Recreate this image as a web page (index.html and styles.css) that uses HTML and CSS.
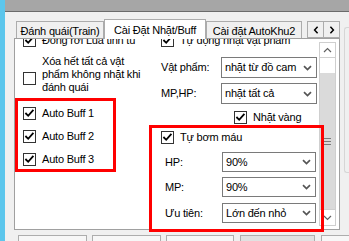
FILE: index.html
```html
<!DOCTYPE html>
<html lang="vi">
<head>
    <meta charset="UTF-8">
    <meta name="viewport" content="width=device-width, initial-scale=1.0">
    <title>Cài Đặt Nhặt/Buff</title>
    <link rel="stylesheet" href="styles.css">
</head>
<body>
    <div class="accent"></div>

    <div class="window">
        <div class="titlebar"></div>

        <div class="client">
            <div class="top-row">
                <div class="tab-control">
                    <div class="tab-strip">
                        <div class="tab tab-train">Đánh quái(Train)</div>
                        <div class="tab tab-loot active">Cài Đặt Nhặt/Buff</div>
                        <div class="tab tab-khu">Cài đặt AutoKhu2</div>
                        <div class="tab-scroll">
                            <span class="tab-arrow">
                                <svg width="6" height="8" viewBox="0 0 6 8"><path d="M4.6 0.8 L1.6 4 L4.6 7.2" fill="none" stroke="#000" stroke-width="1.5"/></svg>
                            </span>
                            <span class="tab-arrow">
                                <svg width="6" height="8" viewBox="0 0 6 8"><path d="M1.4 0.8 L4.4 4 L1.4 7.2" fill="none" stroke="#000" stroke-width="1.5"/></svg>
                            </span>
                        </div>
                    </div>

                    <div class="tab-panel">
                        <div class="scroll-view">
                            <div class="content">
                                <div class="col col-left">
                                    <label class="check">
                                        <span class="box"><svg width="11" height="11" viewBox="0 0 11 11"><path d="M1.4 5 L4.2 7.8 L9.4 1.8" fill="none" stroke="#000" stroke-width="1.8"/></svg></span>
                                        Đồng rời Lúa tinh tú
                                    </label>
                                    <label class="check multi">
                                        <span class="box"></span>
                                        <span>Xóa hết tất cả vật<br>phẩm không nhặt khi<br>đánh quái</span>
                                    </label>
                                    <label class="check buff first-buff">
                                        <span class="box"><svg width="11" height="11" viewBox="0 0 11 11"><path d="M1.4 5 L4.2 7.8 L9.4 1.8" fill="none" stroke="#000" stroke-width="1.8"/></svg></span>
                                        Auto Buff 1
                                    </label>
                                    <label class="check buff">
                                        <span class="box"><svg width="11" height="11" viewBox="0 0 11 11"><path d="M1.4 5 L4.2 7.8 L9.4 1.8" fill="none" stroke="#000" stroke-width="1.8"/></svg></span>
                                        Auto Buff 2
                                    </label>
                                    <label class="check buff">
                                        <span class="box"><svg width="11" height="11" viewBox="0 0 11 11"><path d="M1.4 5 L4.2 7.8 L9.4 1.8" fill="none" stroke="#000" stroke-width="1.8"/></svg></span>
                                        Auto Buff 3
                                    </label>
                                </div>

                                <div class="col col-right">
                                    <label class="check">
                                        <span class="box"><svg width="11" height="11" viewBox="0 0 11 11"><path d="M1.4 5 L4.2 7.8 L9.4 1.8" fill="none" stroke="#000" stroke-width="1.8"/></svg></span>
                                        Tự động nhặt vật phẩm
                                    </label>
                                    <div class="field loot-type">
                                        <span class="field-label">Vật phẩm:</span>
                                        <div class="combo">
                                            <span>nhặt từ đồ cam</span>
                                            <svg width="9" height="6" viewBox="0 0 9 6"><path d="M1 1.2 L4.5 4.6 L8 1.2" fill="none" stroke="#555" stroke-width="1.7"/></svg>
                                        </div>
                                    </div>
                                    <div class="field loot-target">
                                        <span class="field-label">MP,HP:</span>
                                        <div class="combo">
                                            <span>nhặt tất cả</span>
                                            <svg width="9" height="6" viewBox="0 0 9 6"><path d="M1 1.2 L4.5 4.6 L8 1.2" fill="none" stroke="#555" stroke-width="1.7"/></svg>
                                        </div>
                                    </div>
                                    <label class="check gold">
                                        <span class="box"><svg width="11" height="11" viewBox="0 0 11 11"><path d="M1.4 5 L4.2 7.8 L9.4 1.8" fill="none" stroke="#000" stroke-width="1.8"/></svg></span>
                                        Nhặt vàng
                                    </label>
                                    <label class="check potion-toggle">
                                        <span class="box"><svg width="11" height="11" viewBox="0 0 11 11"><path d="M1.4 5 L4.2 7.8 L9.4 1.8" fill="none" stroke="#000" stroke-width="1.8"/></svg></span>
                                        Tự bơm máu
                                    </label>
                                    <div class="field potion potion-hp">
                                        <span class="field-label">HP:</span>
                                        <div class="combo">
                                            <span>90%</span>
                                            <svg width="9" height="6" viewBox="0 0 9 6"><path d="M1 1.2 L4.5 4.6 L8 1.2" fill="none" stroke="#555" stroke-width="1.7"/></svg>
                                        </div>
                                    </div>
                                    <div class="field potion potion-mp">
                                        <span class="field-label">MP:</span>
                                        <div class="combo">
                                            <span>90%</span>
                                            <svg width="9" height="6" viewBox="0 0 9 6"><path d="M1 1.2 L4.5 4.6 L8 1.2" fill="none" stroke="#555" stroke-width="1.7"/></svg>
                                        </div>
                                    </div>
                                    <div class="field potion potion-order">
                                        <span class="field-label">Ưu tiên:</span>
                                        <div class="combo">
                                            <span>Lớn đến nhỏ</span>
                                            <svg width="9" height="6" viewBox="0 0 9 6"><path d="M1 1.2 L4.5 4.6 L8 1.2" fill="none" stroke="#555" stroke-width="1.7"/></svg>
                                        </div>
                                    </div>
                                </div>
                            </div>
                        </div>

                        <div class="scrollbar">
                            <div class="sb-btn">
                                <svg width="9" height="6" viewBox="0 0 9 6"><path d="M1 5 L4.5 1.5 L8 5" fill="none" stroke="#606060" stroke-width="1.2"/></svg>
                            </div>
                            <div class="sb-track">
                                <div class="sb-thumb">
                                    <span class="grip"></span>
                                    <span class="grip"></span>
                                    <span class="grip"></span>
                                </div>
                            </div>
                            <div class="sb-btn sb-down">
                                <svg width="9" height="6" viewBox="0 0 9 6"><path d="M1 1 L4.5 4.5 L8 1" fill="none" stroke="#606060" stroke-width="1.2"/></svg>
                            </div>
                        </div>
                    </div>
                </div>

                <div class="side-box"></div>
            </div>

            <div class="button-row">
                <div class="btn btn-a"></div>
                <div class="btn btn-b"></div>
                <div class="btn btn-c"></div>
                <div class="btn btn-d"></div>
                <div class="btn btn-e"></div>
            </div>
        </div>
    </div>

    <div class="mark mark-buff"></div>
    <div class="mark mark-hp"></div>
</body>
</html>
```

FILE: styles.css
```css
body {
    margin: 0;
    width: 349px;
    height: 241px;
    overflow: hidden;
    display: flex;
    position: relative;
    background-color: #f0f0f0;
    font-family: "Liberation Sans", Arial, sans-serif;
    font-size: 11px;
    line-height: 13px;
    letter-spacing: -0.2px;
    color: #000;
}
.accent {
    width: 5px;
    flex: none;
    background-color: #5cc6ec;
}
.window {
    flex: 1;
    min-width: 0;
    display: flex;
    flex-direction: column;
}
.titlebar {
    height: 11px;
    flex: none;
    background-color: #a6a6a6;
    border-bottom: 1px solid #6b6b6b;
}
.client {
    padding: 7px 0 0 9px;
}
.top-row {
    display: flex;
}

/* tab control */
.tab-control {
    width: 326px;
    flex: none;
}
.tab-strip {
    display: flex;
    align-items: flex-end;
    height: 19px;
    padding-left: 2px;
}
.tab {
    box-sizing: border-box;
    height: 17px;
    padding-top: 2px;
    border: 1px solid #acacac;
    border-bottom: 0;
    background-color: #f0f0f0;
    display: flex;
    align-items: center;
    justify-content: center;
    white-space: nowrap;
}
.tab-train {
    width: 88px;
}
.tab-loot {
    width: 102px;
}
.tab-khu {
    width: 96px;
}
.tab.active {
    height: 20px;
    margin-bottom: -1px;
    background-color: #fff;
    position: relative;
    z-index: 1;
}
.tab-scroll {
    margin-left: auto;
    display: flex;
}
.tab-arrow {
    box-sizing: border-box;
    width: 17px;
    height: 17px;
    border: 1px solid #acacac;
    background-color: #f0f0f0;
    display: flex;
    align-items: center;
    justify-content: center;
}
.tab-arrow + .tab-arrow {
    width: 16px;
    border-left: 0;
}
.tab-panel {
    box-sizing: border-box;
    height: 192px;
    border: 1px solid #a0a0a0;
    background-color: #fff;
    display: flex;
}

/* scrolled content */
.scroll-view {
    flex: 1;
    overflow: hidden;
}
.content {
    display: flex;
    margin-top: -6px;
}
.col {
    display: flex;
    flex-direction: column;
}
.col-left {
    width: 146px;
    box-sizing: border-box;
    padding-left: 8px;
    flex: none;
}
.col-right {
    flex: 1;
}
.check {
    display: flex;
    align-items: center;
    height: 14px;
    white-space: nowrap;
}
.box {
    width: 13px;
    height: 13px;
    box-sizing: border-box;
    border: 1px solid #333;
    background-color: #fff;
    margin-right: 6px;
    flex: none;
}
.box svg {
    display: block;
}
.check.multi {
    height: auto;
    margin-top: 8px;
}
.check.multi .box {
    margin-top: 8px;
}
.check.buff {
    height: 23px;
}
.first-buff {
    margin-top: 8px;
}
.field {
    display: flex;
    align-items: center;
    white-space: nowrap;
}
.field-label {
    width: 60px;
    flex: none;
}
.combo {
    box-sizing: border-box;
    width: 96px;
    height: 21px;
    padding: 0 4px 0 3px;
    border: 1px solid #7a7a7a;
    background-color: #fff;
    display: flex;
    align-items: center;
    justify-content: space-between;
}
.combo svg {
    flex: none;
}
.loot-type {
    margin-top: 10px;
}
.loot-target {
    margin-top: 5px;
}
.gold {
    margin-top: 6px;
    padding-left: 73px;
}
.potion-toggle {
    margin-top: 6px;
}
.potion {
    padding-left: 4px;
}
.potion .field-label {
    width: 57px;
}
.potion .combo {
    width: 94px;
    height: 20px;
}
.potion-hp {
    margin-top: 8px;
}
.potion-mp {
    margin-top: 5px;
}
.potion-order {
    margin-top: 6px;
}

/* scrollbar */
.scrollbar {
    width: 17px;
    box-sizing: border-box;
    margin: 3px 3px 3px 0;
    border-left: 1px solid #cfcfcf;
    border-right: 1px solid #cfcfcf;
    background-color: #fff;
    display: flex;
    flex-direction: column;
    flex: none;
}
.sb-btn {
    height: 16px;
    box-sizing: border-box;
    border-top: 1px solid #cfcfcf;
    border-bottom: 1px solid #cfcfcf;
    display: flex;
    align-items: center;
    justify-content: center;
    flex: none;
}
.sb-down {
    height: 17px;
}
.sb-track {
    flex: 1;
    padding-top: 15px;
    display: flex;
    flex-direction: column;
}
.sb-thumb {
    flex: 1;
    background-color: #dadada;
    display: flex;
    flex-direction: column;
    align-items: center;
    justify-content: center;
    gap: 2px;
}
.grip {
    width: 7px;
    height: 1px;
    background-color: #7a7a7a;
}

.side-box {
    width: 5px;
    height: 146px;
    margin: 8px 0 0 4px;
    box-sizing: border-box;
    border: 1px solid #d6d6d6;
    border-right: 0;
    border-radius: 3px 0 0 3px;
    flex: none;
}

/* buttons under the tabs */
.button-row {
    display: flex;
    margin-top: 5px;
    padding-left: 4px;
}
.btn {
    box-sizing: border-box;
    height: 23px;
    border: 1px solid #adadad;
    background-color: #f7f7f7;
    flex: none;
    margin-right: 5px;
}
.btn-a,
.btn-b {
    width: 69px;
}
.btn-c {
    width: 68px;
    margin-right: 6px;
}
.btn-d {
    width: 75px;
    margin-right: 6px;
    background-color: #e1e1e1;
}
.btn-e {
    width: 40px;
}

/* red annotation boxes drawn over the screenshot */
.mark {
    position: absolute;
    box-sizing: border-box;
    border: 3px solid #ff0000;
}
.mark-buff {
    left: 15px;
    top: 98px;
    width: 101px;
    height: 74px;
}
.mark-hp {
    left: 149px;
    top: 125px;
    width: 175px;
    height: 107px;
}
```
